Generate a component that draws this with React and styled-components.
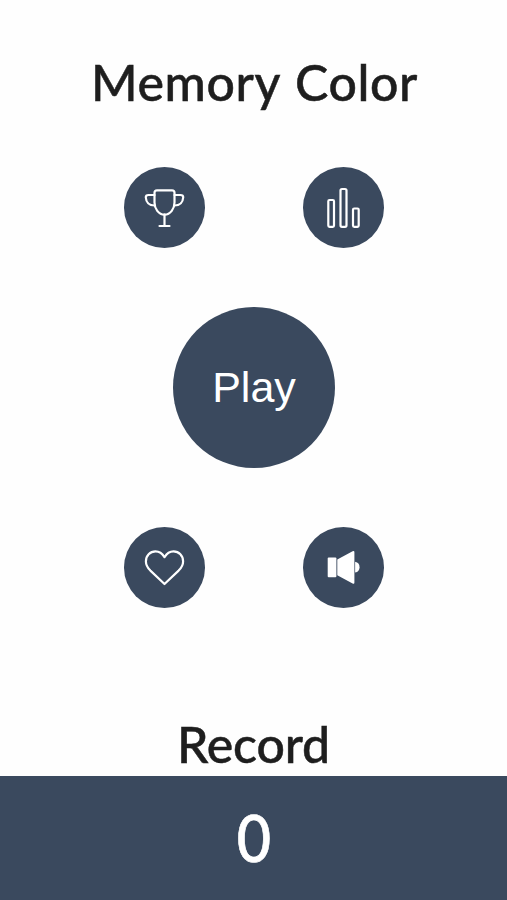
import React from "react";
import styled, { createGlobalStyle } from "styled-components";

const NAVY = "#3A495E";
const INK = "#1E1E1E";
const PAPER = "#FEFEFE";

const GlobalStyle = createGlobalStyle`
  body {
    margin: 0;
    background: ${PAPER};
  }
`;

const Screen = styled.main`
  display: flex;
  flex-direction: column;
  box-sizing: border-box;
  width: 507px;
  height: 900px;
  overflow: hidden;
  background: ${PAPER};
  color: ${INK};
  font-family: Lato, "Liberation Sans", sans-serif;
`;

const Title = styled.h1`
  margin: 0;
  padding-top: 52px;
  height: 115px;
  padding-left: 2px;
  font-size: 50px;
  font-weight: 500;
  line-height: 60px;
  letter-spacing: 0.6px;
  word-spacing: 2px;
  text-align: center;
  white-space: nowrap;
  -webkit-text-stroke: 0.5px ${INK};
`;

const Menu = styled.nav`
  display: flex;
  flex-direction: column;
  align-items: center;
  gap: 59px;
  padding-left: 1px;
`;

const ButtonRow = styled.div`
  display: flex;
  gap: 98px;
`;

const RoundButton = styled.button`
  display: flex;
  align-items: center;
  justify-content: center;
  width: ${({ $size }) => $size}px;
  height: ${({ $size }) => $size - 0.4}px;
  padding: 0;
  border: 0;
  border-radius: 50%;
  background: ${NAVY};
  color: #fff;
  font-family: "Liberation Sans", Arial, sans-serif;
  font-size: 43px;
  line-height: 50px;
`;

const Icon = styled.svg`
  flex: none;
  width: 81px;
  height: 81px;
  fill: none;
  stroke: #fff;
  stroke-width: 2.2;
  stroke-linejoin: round;
  stroke-linecap: round;
`;

const RecordLabel = styled.h2`
  margin: auto 0 2px;
  font-size: 50px;
  font-weight: 500;
  line-height: 60px;
  letter-spacing: -0.1px;
  text-align: center;
  -webkit-text-stroke: 0.5px ${INK};
`;

const Score = styled.footer`
  display: flex;
  align-items: center;
  justify-content: center;
  box-sizing: border-box;
  height: 124px;
  padding-bottom: 2px;
  background: ${NAVY};
  color: #fff;
  font-size: 65px;
  font-weight: 500;
`;

const ScoreValue = styled.span`
  transform: scaleX(0.91);
  -webkit-text-stroke: 0.7px #fff;
`;

const TrophyIcon = () => (
  <Icon viewBox="0 0 81 81">
    <path d="M33 23.3h15q2.5 0 2.5 2.5v9.7c0 6-4 12.2-10 12.2s-10-6.2-10-12.2v-9.7q0-2.5 2.5-2.5z" />
    <path d="M30.5 28h-6q-2.9 0-2.7 2.5c.3 4.5 3.2 8 8.7 8M50.5 28h6q2.9 0 2.7 2.5c-.3 4.5-3.2 8-8.7 8M40.5 47.5V59M35.5 59h10" />
  </Icon>
);

const BarsIcon = () => (
  <Icon viewBox="0 0 81 81">
    <rect x="25.3" y="33" width="5.7" height="26.8" rx="1.2" />
    <rect x="37.5" y="22" width="6" height="37.8" rx="1.5" />
    <rect x="50" y="41.5" width="5.7" height="18.3" rx="1.2" />
  </Icon>
);

const HeartIcon = () => (
  <Icon viewBox="0 0 81 81">
    <path d="M40.5 30.2C38.3 26.6 35.3 24.4 31.5 24.4c-5.5 0-9.6 4.4-9.6 10 0 4 1.8 6.4 4.5 9.2L40.5 57l14.1-13.4c2.7-2.8 4.5-5.2 4.5-9.2 0-5.6-4.1-10-9.6-10-3.8 0-6.8 2.2-9 5.8z" />
  </Icon>
);

const SpeakerIcon = () => (
  <Icon viewBox="0 0 81 81">
    <g fill="#fff" stroke="none">
      <rect x="24.7" y="30.5" width="8.7" height="19.8" rx="1" />
      <path d="M34.3 32.5 49.6 24.3q1.8-.9 1.8 1v30.2q0 2-1.8 1L34.3 48.2z" />
      <path d="M52.1 34.8a5.5 5.5 0 0 1 0 10.8z" />
    </g>
  </Icon>
);

const App = () => (
  <>
    <GlobalStyle />
    <Screen>
      <Title>Memory Color</Title>
      <Menu>
        <ButtonRow>
          <RoundButton $size={81} aria-label="Trophies">
            <TrophyIcon />
          </RoundButton>
          <RoundButton $size={81} aria-label="Leaderboard">
            <BarsIcon />
          </RoundButton>
        </ButtonRow>
        <RoundButton $size={162}>Play</RoundButton>
        <ButtonRow>
          <RoundButton $size={81} aria-label="Favourite">
            <HeartIcon />
          </RoundButton>
          <RoundButton $size={81} aria-label="Sound">
            <SpeakerIcon />
          </RoundButton>
        </ButtonRow>
      </Menu>
      <RecordLabel>Record</RecordLabel>
      <Score>
        <ScoreValue>0</ScoreValue>
      </Score>
    </Screen>
  </>
);

export default App;
